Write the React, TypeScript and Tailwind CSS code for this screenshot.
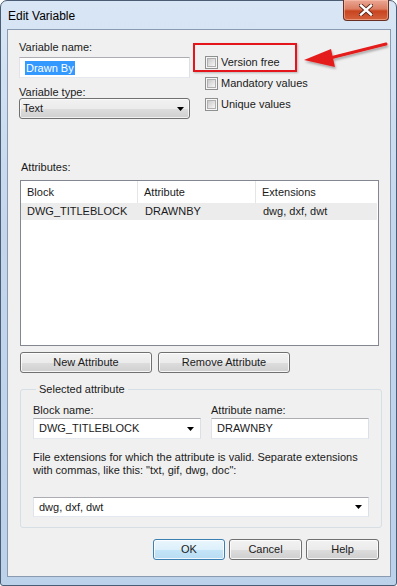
import React from "react";

const font = "font-['Liberation_Sans',Arial,sans-serif]";

function Checkbox({ label }: { label: string }) {
  return (
    <div className="flex items-center h-[13px] gap-[3px]">
      <div className="w-[13px] h-[13px] border border-[#8e8f8f] bg-[#f6f6f6] p-[1px] shrink-0">
        <div className="w-full h-full bg-gradient-to-br from-[#c9c9c9] to-[#f7f7f7] border border-[#b0b0b0]" />
      </div>
      <span className="leading-[13px] text-[#1a1a1a]">{label}</span>
    </div>
  );
}

function Arrow() {
  return (
    <svg width="7" height="4" viewBox="0 0 7 4" className="shrink-0">
      <path d="M0 0 H7 L3.5 4 Z" fill="#000" />
    </svg>
  );
}

function Button({ children, w, isDefault }: { children: React.ReactNode; w: string; isDefault?: boolean }) {
  return (
    <div
      className={`${w} h-[21px] rounded-[3px] border flex items-center justify-center leading-[13px] text-[#1a1a1a] shadow-[inset_0_0_0_1px_rgba(255,255,255,0.8)] ${
        isDefault
          ? "border-[#3c7fb1] bg-[linear-gradient(to_bottom,#eaf6fd_0%,#dcf0fb_50%,#c4e5f8_51%,#b8dcf3_100%)]"
          : "border-[#707070] bg-[linear-gradient(to_bottom,#f2f2f2_0%,#ebebeb_50%,#dddddd_51%,#cfcfcf_100%)]"
      }`}
    >
      {children}
    </div>
  );
}

export default function App() {
  return (
    <div className={`${font} text-[11px] w-[397px] h-[586px] relative`}>
      <div className="w-full h-full rounded-t-[7px] rounded-b-[3px] border border-[#4a5d75] bg-[linear-gradient(to_bottom,#d9e6f5_0%,#c3d6ec_40%,#bcd1ea_100%)] flex flex-col">
        {/* Title bar */}
        <div className="h-[28px] flex items-start justify-between shrink-0">
          <div className="pl-[7px] pt-[8px] text-[12px] leading-[14px] text-black">Edit Variable</div>
          <div className="mr-[7px] mt-[-1px] w-[46px] h-[21px] rounded-b-[4px] border border-[#6b2f22] border-t-0 bg-[linear-gradient(to_bottom,#eaa795_0%,#dc7d62_45%,#c8441f_55%,#d3623d_100%)] flex items-center justify-center shadow-[inset_0_0_0_1px_rgba(255,200,180,0.5)]">
            <svg width="14" height="12" viewBox="0 0 14 12">
              <path d="M2 1.5 L12 10.5 M12 1.5 L2 10.5" stroke="#5a2417" strokeWidth="4.2" strokeLinecap="square" />
              <path d="M2 1.5 L12 10.5 M12 1.5 L2 10.5" stroke="#ffffff" strokeWidth="2.4" strokeLinecap="square" />
            </svg>
          </div>
        </div>

        {/* Client area */}
        <div className="ml-[6px] w-[384px] h-[548px] border border-[#8a9bb1] bg-[#f0f0f0] relative text-[#1a1a1a]">
          {/* Top section */}
          <div className="flex">
            <div className="ml-[11px] w-[171px] pt-[10px]">
              <div className="h-[14px] leading-[14px]">Variable name:</div>
              <div className="mt-[3px] h-[21px] border border-[#abadb3] border-l-[#e2e3ea] border-r-[#dbdfe6] border-b-[#e3e9ef] bg-white flex items-center pl-[5px]">
                <span className="bg-[#3399ff] text-white leading-[14px] px-[1px]">Drawn By</span>
              </div>
              <div className="mt-[7px] h-[14px] leading-[14px]">Variable type:</div>
              <div className="mt-[-1px] h-[21px] rounded-[3px] border border-[#707070] bg-[linear-gradient(to_bottom,#f2f2f2_0%,#ebebeb_50%,#dddddd_51%,#cfcfcf_100%)] shadow-[inset_0_0_0_1px_rgba(255,255,255,0.7)] flex items-center justify-between pl-[3px] pr-[5px]">
                <span>Text</span>
                <Arrow />
              </div>
            </div>
            <div className="ml-[15px] pt-[26px] flex flex-col gap-[8px]">
              <Checkbox label="Version free" />
              <Checkbox label="Mandatory values" />
              <Checkbox label="Unique values" />
            </div>
          </div>

          {/* Highlight box and arrow (annotation overlay) */}
          <div className="absolute left-[185px] top-[13px] w-[104px] h-[29px] border-2 border-[#e4161b] shadow-[1px_1px_2px_rgba(0,0,0,0.25)]" />
          <svg className="absolute left-[292px] top-[10px]" width="90" height="36" viewBox="0 0 90 36">
            <defs>
              <filter id="sh" x="-10%" y="-30%" width="130%" height="180%">
                <feDropShadow dx="1" dy="2" stdDeviation="1.2" floodColor="#000" floodOpacity="0.3" />
              </filter>
            </defs>
            <g filter="url(#sh)">
              <path d="M86 4 L30 18" stroke="#e41e1f" strokeWidth="3" strokeLinecap="round" />
              <path d="M4 20 L31 9 L35 27 Z" fill="#e41e1f" />
            </g>
          </svg>

          {/* Attributes */}
          <div className="ml-[13px] mt-[41px] h-[14px] leading-[14px]">Attributes:</div>
          <div className="ml-[12px] mt-[6px] w-[359px] h-[166px] border border-[#828790] bg-white">
            <div className="flex h-[22px] items-center">
              <div className="w-[117px] h-full flex items-center pl-[6px] border-r border-[#e5e5e5]">Block</div>
              <div className="w-[118px] h-full flex items-center pl-[6px] border-r border-[#e5e5e5]">Attribute</div>
              <div className="flex-1 h-full flex items-center pl-[6px]">Extensions</div>
            </div>
            <div className="flex h-[17px] items-center bg-[#ececec] mr-[1px]">
              <div className="w-[118px] pl-[6px]">DWG_TITLEBLOCK</div>
              <div className="w-[118px] pl-[6px]">DRAWNBY</div>
              <div className="flex-1 pl-[6px]">dwg, dxf, dwt</div>
            </div>
          </div>

          {/* Buttons */}
          <div className="ml-[12px] mt-[6px] flex gap-[6px]">
            <Button w="w-[132px]">New Attribute</Button>
            <Button w="w-[132px]">Remove Attribute</Button>
          </div>

          {/* Selected attribute group */}
          <fieldset className="ml-[12px] mt-[9px] w-[359px] h-[146px] border border-[#d5dfe5] rounded-[3px] px-[12px]">
            <legend className="ml-[3px] px-[3px] leading-[14px]">Selected attribute</legend>
            <div className="flex gap-[10px] mt-[7px]">
              <div className="w-[168px]">
                <div className="h-[14px] leading-[14px]">Block name:</div>
                <div className="mt-[1px] h-[21px] border border-[#abadb3] border-l-[#e2e3ea] border-r-[#dbdfe6] border-b-[#e3e9ef] bg-white flex items-center justify-between pl-[5px] pr-[6px]">
                  <span>DWG_TITLEBLOCK</span>
                  <Arrow />
                </div>
              </div>
              <div className="w-[158px]">
                <div className="h-[14px] leading-[14px]">Attribute name:</div>
                <div className="mt-[1px] h-[21px] border border-[#abadb3] border-l-[#e2e3ea] border-r-[#dbdfe6] border-b-[#e3e9ef] bg-white flex items-center pl-[5px]">
                  <span>DRAWNBY</span>
                </div>
              </div>
            </div>
            <div className="mt-[12px] leading-[13px]">
              File extensions for which the attribute is valid. Separate extensions
              <br />
              with commas, like this: "txt, gif, dwg, doc":
            </div>
            <div className="mt-[20px] w-[336px] h-[20px] border border-[#abadb3] border-l-[#e2e3ea] border-r-[#dbdfe6] border-b-[#e3e9ef] bg-white flex items-center justify-between pl-[5px] pr-[6px]">
              <span>dwg, dxf, dwt</span>
              <Arrow />
            </div>
          </fieldset>

          {/* Dialog buttons */}
          <div className="mt-[11px] mr-[11px] flex justify-end gap-[4px]">
            <Button w="w-[72px]" isDefault>OK</Button>
            <Button w="w-[73px]">Cancel</Button>
            <Button w="w-[73px]">Help</Button>
          </div>
        </div>
      </div>
    </div>
  );
}
